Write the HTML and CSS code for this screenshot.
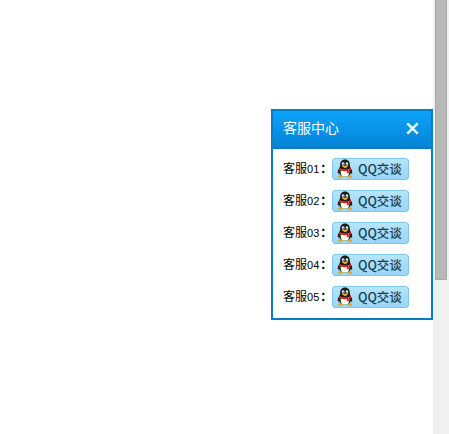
FILE: index.html
```html
<!DOCTYPE html>
<html lang="zh">
<head>
<meta charset="utf-8">
<title>客服中心</title>
<link rel="stylesheet" href="styles.css">
</head>
<body>
<svg class="defs" width="0" height="0" aria-hidden="true">
  <symbol id="qq" viewBox="0 0 18 18">
    <path d="M9 .5C6 .5 4.6 2.800 4.600 5.200c0 .8 0 1.300-.2 1.800C3.400 8.700 2.300 10.800 2.500 12.500c.1.800.7.700 1.300.1C4.200 14 5 14.900 5.800 15.500H12.200C13 14.900 13.800 14 14.200 12.600c.6.600 1.200.700 1.300-.1.200-1.700-.9-3.800-1.900-5.500-.2-.5-.2-1-.2-1.800C13.400 2.800 12 .5 9 .5Z" fill="#1c1c20"/>
    <path d="M5.300 9.800C4.800 11.800 5.300 14.300 6.500 15.600H11.500C12.700 14.300 13.200 11.800 12.700 9.800Z" fill="#fafaf6"/>
    <ellipse cx="7.300" cy="4.600" rx="1.200" ry="1.600" fill="#fff"/>
    <ellipse cx="10.700" cy="4.600" rx="1.200" ry="1.600" fill="#fff"/>
    <circle cx="7.500" cy="4.800" r=".6" fill="#111"/>
    <circle cx="10.500" cy="4.800" r=".6" fill="#111"/>
    <path d="M6.300 6.700Q9 5.500 11.700 6.700L9 8.300Z" fill="#f2b01e"/>
    <path d="M3.900 8.200Q9 10.300 14.100 8.200L14.600 10 12.300 10.500 12.700 13.200 10.500 12.200 10.800 10.800Q8 11.100 5.600 10.600L3.500 10Z" fill="#e0261c"/>
    <path d="M3.300 15C4.500 14.200 6.300 14.800 7.300 16.300 6 17.700 3.300 17.500 2.300 16.500Z" fill="#f0a41c"/>
    <path d="M14.700 15C13.500 14.200 11.700 14.800 10.700 16.300 12 17.700 14.700 17.500 15.700 16.500Z" fill="#f0a41c"/>
  </symbol>
</svg>
<div class="page">
  <main class="content"></main>
  <div class="scrollbar"><div class="thumb"></div></div>
</div>
<aside class="panel">
  <header class="panel-head">
    <h1 class="panel-title">客服中心</h1>
    <svg class="close" viewBox="0 0 12 12" width="13" height="13" aria-label="关闭"><path d="M1.200 1.200 10.800 10.800M10.800 1.200 1.200 10.800" stroke="#fff" stroke-width="2.200" fill="none"/></svg>
  </header>
  <ul class="list">
    <li class="row"><span class="label">客服<span class="num">01</span><span class="colon">：</span></span><a class="qq-btn"><svg class="qq-icon" width="20" height="20"><use href="#qq"/></svg><span class="qq-text">QQ交谈</span></a></li>
    <li class="row"><span class="label">客服<span class="num">02</span><span class="colon">：</span></span><a class="qq-btn"><svg class="qq-icon" width="20" height="20"><use href="#qq"/></svg><span class="qq-text">QQ交谈</span></a></li>
    <li class="row"><span class="label">客服<span class="num">03</span><span class="colon">：</span></span><a class="qq-btn"><svg class="qq-icon" width="20" height="20"><use href="#qq"/></svg><span class="qq-text">QQ交谈</span></a></li>
    <li class="row"><span class="label">客服<span class="num">04</span><span class="colon">：</span></span><a class="qq-btn"><svg class="qq-icon" width="20" height="20"><use href="#qq"/></svg><span class="qq-text">QQ交谈</span></a></li>
    <li class="row"><span class="label">客服<span class="num">05</span><span class="colon">：</span></span><a class="qq-btn"><svg class="qq-icon" width="20" height="20"><use href="#qq"/></svg><span class="qq-text">QQ交谈</span></a></li>
  </ul>
</aside>
</body>
</html>
```
FILE: styles.css
```css
* { box-sizing: border-box; }
html, body { margin: 0; height: 100%; overflow: hidden; background: #fff; }
body { font-family: "Noto Sans CJK TC", "Liberation Sans", sans-serif; font-size: 12px; color: #000; }
.defs { position: absolute; }
.page { display: flex; height: 100%; }
.content { flex: 1; }
.scrollbar { width: 16px; background: #f0f0f0; padding: 0 2px; }
.thumb { height: 280px; background: #b8b8b8; border: 1px solid #a8a8a8; border-top: 0; }
.panel { position: absolute; left: 271px; top: 109px; width: 162px; height: 211px; border: 2px solid #0a7cc4; background: #fff; }
.panel-head { height: 38px; display: flex; align-items: center; justify-content: space-between; padding: 0 12px 2px 10px; background: linear-gradient(#0da3fb, #0484d6); border-bottom: 2px solid #0a7cc4; }
.panel-title { margin: 0; font-size: 14px; font-weight: 400; line-height: 1; color: #fff; transform: translateY(-1px); }
.close { display: block; }
.list { list-style: none; margin: 0; padding: 9px 0 0 10px; display: flex; flex-direction: column; gap: 10px; }
.row { display: flex; align-items: center; height: 22px; }
.label { flex: none; width: 49px; margin-bottom: 2px; line-height: 1; white-space: nowrap; }
.num { font-family: "Liberation Sans", sans-serif; font-size: 11px; }
.colon { margin-left: 1px; font-weight: 700; }
.qq-btn { flex: none; width: 77px; height: 22px; display: flex; align-items: center; gap: 3px; padding-left: 2px; border: 1px solid #7cc6ec; border-radius: 3px; background: linear-gradient(#b9e4fa, #98d6f6); color: #163f5a; line-height: 1; }
.qq-text { font-size: 12.500px; font-weight: 500; }
.qq-icon { flex: none; }
```
